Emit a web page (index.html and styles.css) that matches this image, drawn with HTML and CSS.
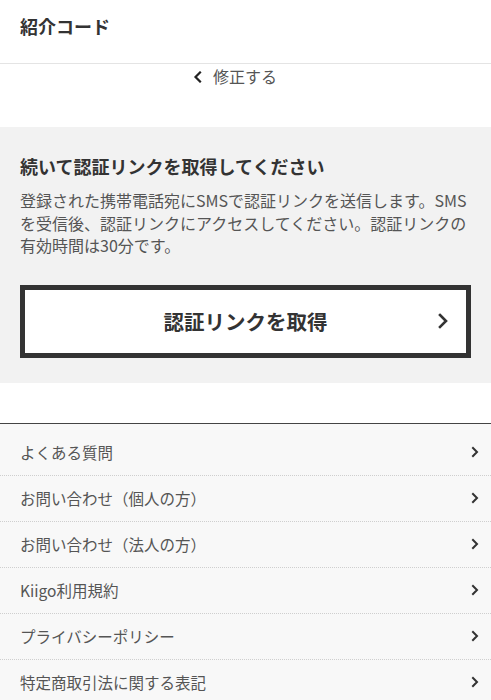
FILE: index.html
```html
<!DOCTYPE html>
<html lang="ja">
<head>
<meta charset="utf-8">
<title>紹介コード</title>
<link rel="stylesheet" href="styles.css">
</head>
<body>
<header class="header">
  <h1 class="header-title">紹介コード</h1>
</header>
<div class="back-row">
  <a class="back-link" href="#">
    <svg class="back-icon" width="10" height="12" viewBox="0 0 10 12"><polyline points="7,1.5 2.5,6 7,10.5" fill="none" stroke="#222" stroke-width="2.2" stroke-linecap="square"/></svg>
    <span>修正する</span>
  </a>
</div>
<section class="verify">
  <h2 class="verify-title">続いて認証リンクを取得してください</h2>
  <p class="verify-text">登録された携帯電話宛にSMSで認証リンクを送信します。SMSを受信後、認証リンクにアクセスしてください。認証リンクの有効時間は30分です。</p>
  <a class="verify-button" href="#">
    <span class="verify-button-label">認証リンクを取得</span>
    <svg class="verify-button-icon" width="12" height="16" viewBox="0 0 12 16"><polyline points="3,2 9,8 3,14" fill="none" stroke="#333" stroke-width="2.6" stroke-linecap="square"/></svg>
  </a>
</section>
<nav class="footer-nav">
  <ul class="nav-list">
    <li class="nav-item"><a class="nav-link" href="#"><span>よくある質問</span><svg class="nav-icon" width="8" height="12" viewBox="0 0 8 12"><polyline points="2,2 6,6 2,10" fill="none" stroke="#333" stroke-width="2" stroke-linecap="square"/></svg></a></li>
    <li class="nav-item"><a class="nav-link" href="#"><span>お問い合わせ（個人の方）</span><svg class="nav-icon" width="8" height="12" viewBox="0 0 8 12"><polyline points="2,2 6,6 2,10" fill="none" stroke="#333" stroke-width="2" stroke-linecap="square"/></svg></a></li>
    <li class="nav-item"><a class="nav-link" href="#"><span>お問い合わせ（法人の方）</span><svg class="nav-icon" width="8" height="12" viewBox="0 0 8 12"><polyline points="2,2 6,6 2,10" fill="none" stroke="#333" stroke-width="2" stroke-linecap="square"/></svg></a></li>
    <li class="nav-item"><a class="nav-link" href="#"><span>Kiigo利用規約</span><svg class="nav-icon" width="8" height="12" viewBox="0 0 8 12"><polyline points="2,2 6,6 2,10" fill="none" stroke="#333" stroke-width="2" stroke-linecap="square"/></svg></a></li>
    <li class="nav-item"><a class="nav-link" href="#"><span>プライバシーポリシー</span><svg class="nav-icon" width="8" height="12" viewBox="0 0 8 12"><polyline points="2,2 6,6 2,10" fill="none" stroke="#333" stroke-width="2" stroke-linecap="square"/></svg></a></li>
    <li class="nav-item"><a class="nav-link" href="#"><span>特定商取引法に関する表記</span><svg class="nav-icon" width="8" height="12" viewBox="0 0 8 12"><polyline points="2,2 6,6 2,10" fill="none" stroke="#333" stroke-width="2" stroke-linecap="square"/></svg></a></li>
  </ul>
</nav>
</body>
</html>
```
FILE: styles.css
```css
* { box-sizing: border-box; }
html, body { margin: 0; padding: 0; }
body {
  font-family: "Noto Sans CJK JP", "Noto Sans", sans-serif;
  color: #555;
  background: #fff;
  width: 491px;
}
a { text-decoration: none; color: inherit; }

.header {
  height: 64px;
  padding: 13px 20px 0;
  border-bottom: 1px solid #e4e4e4;
}
.header-title {
  margin: 0;
  font-size: 18px;
  line-height: 26px;
  font-weight: bold;
  color: #333;
}

.back-row {
  display: flex;
  justify-content: center;
  height: 63px;
  padding-right: 21px;
}
.back-link {
  display: flex;
  align-items: center;
  gap: 10px;
  height: 24px;
  font-size: 16px;
  color: #555;
}
.back-icon { display: block; margin-top: 1px; }

.verify {
  background: #f2f2f2;
  padding: 26px 20px 25px;
}
.verify-title {
  margin: 0;
  font-size: 18px;
  line-height: 26px;
  font-weight: bold;
  color: #333;
}
.verify-text {
  margin: 10px 0 0;
  font-size: 16px;
  line-height: 22.5px;
  color: #555;
}
.verify-button {
  margin-top: 28px;
  position: relative;
  display: flex;
  align-items: center;
  justify-content: center;
  height: 73px;
  background: #fff;
  border: 5px solid #333;
  color: #333;
}
.verify-button-label {
  font-size: 20.5px;
  font-weight: bold;
}
.verify-button-icon {
  position: absolute;
  right: 17px;
  top: 50%;
  margin-top: -8px;
}

.footer-nav {
  margin-top: 40px;
  border-top: 1.5px solid #444;
  background: #f8f8f8;
}
.nav-list {
  list-style: none;
  margin: 0;
  padding: 6px 0 0;
}
.nav-item {
  border-bottom: 1px dotted #cfcfcf;
}
.nav-link {
  display: flex;
  align-items: center;
  justify-content: space-between;
  height: 45px;
  padding: 0 12px 0 20px;
  font-size: 15.5px;
  color: #555;
}
.nav-icon { display: block; }
```
